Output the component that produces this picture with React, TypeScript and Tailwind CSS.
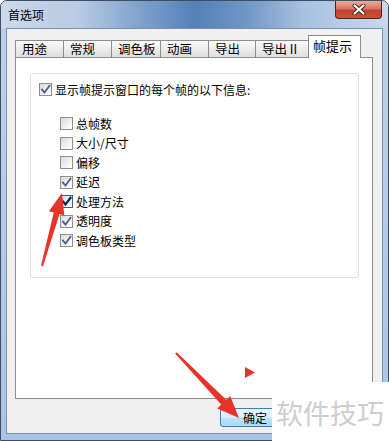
import React from 'react';

const tabs = [
  { label: '用途', w: 'w-[48px]' },
  { label: '常规', w: 'w-[48px]' },
  { label: '调色板', w: 'w-[49px]' },
  { label: '动画', w: 'w-[48px]' },
  { label: '导出', w: 'w-[47px]' },
  { label: '导出 II', w: 'w-[53px]' },
];

const items = [
  { label: '总帧数', checked: false },
  { label: '大小/尺寸', checked: false },
  { label: '偏移', checked: false },
  { label: '延迟', checked: true },
  { label: '处理方法', checked: true, focus: true },
  { label: '透明度', checked: true },
  { label: '调色板类型', checked: true },
];

function CheckBox({ checked, focus }: { checked: boolean; focus?: boolean }) {
  return (
    <span
      className={
        'flex h-[13px] w-[13px] shrink-0 items-center justify-center border ' +
        (focus
          ? 'border-[#3d5f8c] bg-[linear-gradient(135deg,#cfe3f5,#ffffff)]'
          : 'border-[#8e8f8f] bg-[linear-gradient(135deg,#d9d9d9,#f7f7f7_70%,#ffffff)]')
      }
    >
      {checked ? (
        <svg width="11" height="11" viewBox="0 0 11 11">
          <path
            d="M2 5.5 L4.5 8.5 L9.5 1.8"
            fill="none"
            stroke={focus ? '#13245a' : '#4a5d8f'}
            strokeWidth={focus ? 2.2 : 1.8}
            strokeLinecap="square"
          />
        </svg>
      ) : null}
    </span>
  );
}

export default function App() {
  return (
    <div className="relative h-[441px] w-[389px] overflow-hidden bg-white font-['Noto_Sans_CJK_SC','Noto_Sans',sans-serif] text-[12px] leading-none text-black">
      <div className="flex h-[441px] flex-col rounded-t-[7px] border border-[#3e4e62] bg-[linear-gradient(180deg,#bcd2ec,#a9c4e6)]">
        {/* title bar */}
        <div className="flex h-[27px] shrink-0 items-start justify-between rounded-t-[6px] bg-[linear-gradient(90deg,#cbdaec_0%,#b7cbe3_20%,#7fa2cc_36%,#5481b8_50%,#6f95c4_63%,#a7c1e0_78%,#c7d8ed_100%)]">
          <span className="pl-[7px] pt-[8px] text-[12px] text-black">首选项</span>
          <div className="mr-[6px] flex h-[18px] w-[47px] items-center justify-center rounded-b-[4px] border border-t-0 border-[#5e1f16] bg-[linear-gradient(180deg,#e9ad9e_0%,#d57763_45%,#c0422e_55%,#c4553c_100%)]">
            <svg width="14" height="11" viewBox="0 0 14 11">
              <path d="M2.5 1.5 L11.5 9.5 M11.5 1.5 L2.5 9.5" stroke="#4a1c14" strokeWidth="4" strokeLinecap="round" />
              <path d="M2.5 1.5 L11.5 9.5 M11.5 1.5 L2.5 9.5" stroke="#ffffff" strokeWidth="2.2" strokeLinecap="round" />
            </svg>
          </div>
        </div>

        {/* client area */}
        <div className="mx-[5px] flex flex-1 flex-col border border-[#7d91ab] bg-[#f0f0f0] pl-[8px] pt-[6px]">
          <div className="flex h-[22px] items-end">
            {tabs.map((t) => (
              <div
                key={t.label}
                className={`${t.w} flex h-[17px] items-center border-l border-t border-[#898c95] bg-[linear-gradient(180deg,#fcfcfc,#ececec_50%,#dedede)] pl-[6px] text-[12.5px]`}
              >
                {t.label}
              </div>
            ))}
            <div className="relative z-10 -mb-px flex h-[23px] w-[53px] items-start border-x border-t border-[#898c95] bg-white pl-[4px] pt-[3px] text-[13px]">
              帧提示
            </div>
          </div>

          <div className="h-[342px] w-[358px] border border-[#898c95] bg-white">
            <div className="ml-[14px] mt-[15px] h-[205px] w-[329px] rounded-[3px] border border-[#d5dfe5]">
              <div className="flex h-[19.5px] items-center gap-[3px] pl-[8px] pt-[6px] box-content">
                <CheckBox checked />
                <span>显示帧提示窗口的每个帧的以下信息:</span>
              </div>
              <div className="mt-[14.5px] flex flex-col pl-[29px]">
                {items.map((it) => (
                  <div key={it.label} className="flex h-[19.5px] items-center gap-[3px]">
                    <CheckBox checked={it.checked} focus={it.focus} />
                    <span>{it.label}</span>
                  </div>
                ))}
              </div>
            </div>
          </div>

          <div className="mt-[9px] flex gap-[6px] pl-[205px]">
            <div className="flex h-[19px] w-[72px] items-center justify-end rounded-[3px] border border-[#3c7fb1] bg-[linear-gradient(180deg,#eaf6fd,#d9f0fc_50%,#bee6fd_51%,#a7d9f5)] pr-[24px]">
              确定
            </div>
            <div className="h-[19px] w-[72px] rounded-[3px] border border-[#707070] bg-[linear-gradient(180deg,#f2f2f2,#ebebeb_50%,#dddddd_51%,#cfcfcf)]" />
          </div>
        </div>
        <div className="h-[6px] shrink-0" />
      </div>

      {/* red annotations */}
      <svg className="pointer-events-none absolute left-0 top-0" width="389" height="441" viewBox="0 0 389 441">
        <polygon
          points="62,193 64.3,215.4 59.5,214.1 43,266.3 41,265.7 53.7,212.5 48.9,211.2"
          fill="#e8332b"
        />
        <polygon
          points="239,418 217.2,408.5 221.2,404.6 175.3,353.7 176.7,352.3 226.2,399.8 230.2,395.9"
          fill="#e8332b"
        />
        <polygon points="245,367 255,372.5 245,378" fill="#e8332b" />
      </svg>

      {/* watermark */}
      <div className="absolute bottom-0 left-[272px] right-0 top-[382px] bg-white pl-[4px] pt-[17px] text-[27px] leading-none text-[#cdcdcd]">
        软件技巧
      </div>
    </div>
  );
}
